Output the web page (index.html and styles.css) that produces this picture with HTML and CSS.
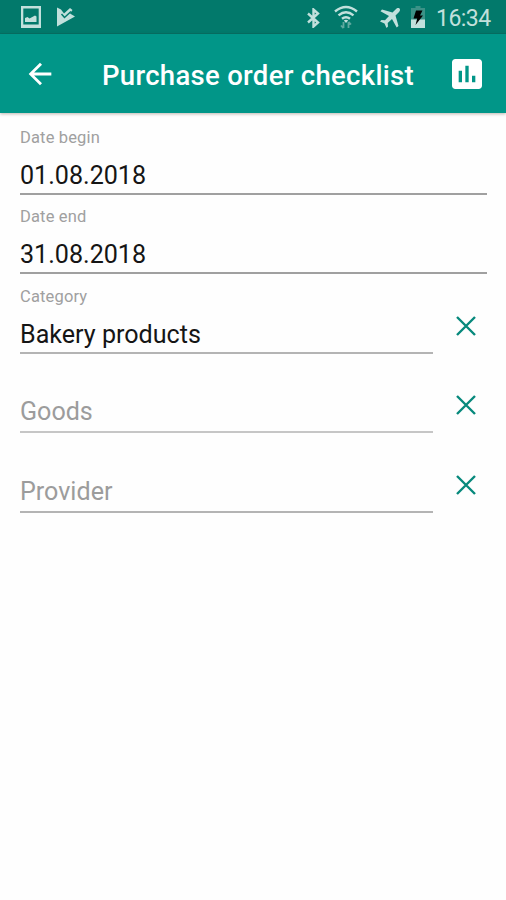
FILE: index.html
```
<!DOCTYPE html>
<html lang="en">
<head>
<meta charset="utf-8">
<title>Purchase order checklist</title>
<link rel="stylesheet" href="styles.css">
</head>
<body>
<header class="status">
  <svg class="s-image" viewBox="0 0 20 22"><path fill-rule="evenodd" d="M0 0h20v22H0zM2.300 2.500v16h15.400v-16zM4 16v-4l2.500-1 2 1.500L14 9.500l1.500 1V16z"/></svg>
  <svg class="s-play" viewBox="0 0 18 20"><path d="M0 .5L4 2.500 7 6.500l6-5.500 2.500 2L13 6.500 18 9.500 0 19.500z"/><path class="cut" d="M4.500 7l3 3.500L14 4.500"/></svg>
  <svg class="s-bt" viewBox="0 0 14 20"><path class="line" d="M1.500 5.500l10 9L7 18.500v-17l4.500 4-10 9"/></svg>
  <svg class="s-wifi" viewBox="0 0 24 24"><path class="line" d="M1 6.500Q12-2.500 23 6.500M4.500 10.300Q12 4 19.500 10.300M8 13.800Q12 10.500 16 13.800"/><path d="M9.800 15.500Q12 13.800 14.200 15.500L12 18z"/><path class="arrows" d="M9.500 17v6M7 20.500l2.500 2.700M14.500 23v-6M17 19.500l-2.500-2.700"/></svg>
  <svg class="s-plane" viewBox="0 0 20 20"><path d="M19.500.5c-1-1-2.700-.3-3.700.7L12.500 4.500 2 1.500.5 3.200 9 8 5 12.300 1.500 12 0 13.500l4.500 2 2 4.500L8 18.500 7.700 15 12 11l4.700 8.500 1.800-1.500-3-10.500 3.300-3.300c1-1 1.700-2.700.7-3.700z"/></svg>
  <svg class="s-battery" viewBox="0 0 14 22"><path class="dim" d="M4.500 0h5v2H14v12H0V2h4.500z"/><path d="M0 13.500h14V22H0z"/><path class="bolt" d="M5 4.500h6.500L9 9.500h3L4.500 19l1.700-6.500H2.500z"/></svg>
  <time class="clock">16:34</time>
</header>
<nav class="toolbar">
  <svg class="back" viewBox="0 0 24 24"><path d="M20 11H7.830l5.590-5.590L12 4l-8 8 8 8 1.410-1.410L7.830 13H20v-2z"/></svg>
  <h1 class="title">Purchase order checklist</h1>
  <svg class="report" viewBox="0 0 24 24"><path d="M19 3H5c-1.100 0-2 .9-2 2v14c0 1.100.9 2 2 2h14c1.100 0 2-.9 2-2V5c0-1.100-.9-2-2-2zM9 17H7v-7h2v7zm4 0h-2V7h2v10zm4 0h-2v-4h2v4z"/></svg>
</nav>
<main class="form">
  <div class="row"><div class="field full"><span class="label">Date begin</span><span class="value">01.08.2018</span></div></div>
  <div class="row"><div class="field full"><span class="label">Date end</span><span class="value">31.08.2018</span></div></div>
  <div class="row"><div class="field"><span class="label">Category</span><span class="value">Bakery products</span></div><svg class="clear" viewBox="0 0 20 20"><path d="M1 1l18 18M19 1L1 19"/></svg></div>
  <div class="row"><div class="field soft"><span class="value hint">Goods</span></div><svg class="clear" viewBox="0 0 20 20"><path d="M1 1l18 18M19 1L1 19"/></svg></div>
  <div class="row"><div class="field"><span class="value hint">Provider</span></div><svg class="clear" viewBox="0 0 20 20"><path d="M1 1l18 18M19 1L1 19"/></svg></div>
</main>
</body>
</html>
```
FILE: styles.css
```
* { box-sizing: border-box; }
body {
  margin: 0;
  height: 900px;
  overflow: hidden;
  background: #fefefe;
  color: #151515;
  font-family: Roboto, "Liberation Sans", sans-serif;
}
svg { display: block; flex: none; }

.status {
  display: flex;
  align-items: flex-start;
  height: 34px;
  padding: 0 15px 0 21px;
  background: #02796b;
  border-bottom: 1px solid #037064;
  fill: #c2e0dc;
  color: #c2e0dc;
}
.status .line { fill: none; stroke: #c2e0dc; stroke-width: 2.4; }
.status .arrows { fill: none; stroke: #5fa99f; stroke-width: 1.8; }
.status .dim { fill: #3b9287; }
.status .bolt { fill: #000; }
.status .cut { fill: none; stroke: #02796b; stroke-width: 1.5; }
.s-image { width: 20px; height: 22px; margin-top: 6px; }
.s-play { width: 18px; height: 20px; margin: 7px 0 0 16px; }
.s-bt { width: 15px; height: 20px; margin: 8px 0 0 auto; }
.s-wifi { width: 24px; height: 24px; margin: 5px 0 0 13px; }
.s-plane { width: 20px; height: 20px; margin: 8px 0 0 22px; }
.s-battery { width: 14px; height: 22px; margin: 6px 0 0 11px; }
.clock { width: 55px; margin-left: 11px; font-size: 23px; letter-spacing: -.55px; line-height: 37px; white-space: nowrap; }

.toolbar {
  display: flex;
  align-items: center;
  height: 79px;
  padding: 0 19px 0 23px;
  background: #019688;
  box-shadow: 0 1px 3px rgba(70, 45, 30, .35);
  fill: #fff;
  color: #fff;
}
.back { width: 34px; height: 34px; }
.title { flex: 1; margin: 5px 0 0 45px; font-size: 27.5px; font-weight: 500; letter-spacing: .3px; line-height: 36px; white-space: nowrap; }
.report { width: 40px; height: 40px; }

.form { padding: 2px 19px 0 20px; }
.row { display: flex; height: 79.5px; }
.field {
  display: flex;
  flex-direction: column;
  justify-content: flex-end;
  width: 413px;
  border-bottom: 2px solid #b4b4b4;
}
.field.full { width: 467px; border-bottom: 2px solid #a0a0a0; }
.field.soft { border-bottom-color: #c6c6c6; }
.label { margin-bottom: 13px; font-size: 16.5px; letter-spacing: .15px; line-height: 20px; color: #a0a0a0; }
.value { margin-bottom: 2px; font-size: 25.1px; line-height: 30px; white-space: nowrap; }
.value.hint { margin-bottom: 4px; color: #9c9c9c; }
.clear { width: 20px; height: 20px; margin: 41.5px 0 0 23px; fill: none; stroke: #07897c; stroke-width: 2.4; }
```
